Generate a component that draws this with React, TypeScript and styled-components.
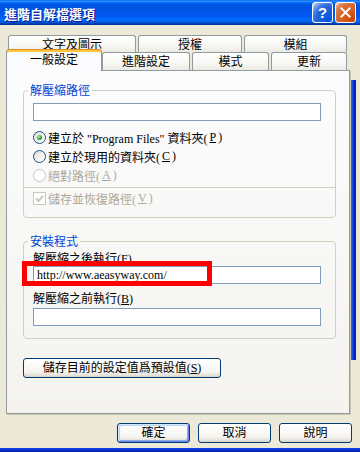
import React from 'react';
import styled, { createGlobalStyle, css } from 'styled-components';

const GlobalStyle = createGlobalStyle`
  html, body {
    margin: 0;
    padding: 0;
  }
  body {
    width: 360px;
    height: 452px;
    overflow: hidden;
    background: #ece9d8;
    font-family: "Liberation Serif", "Noto Sans CJK TC", serif;
    font-size: 12px;
    color: #000;
  }
`;

const Window = styled.div`
    position: relative;
    width: 360px;
    height: 452px;
    display: flex;
    flex-direction: column;
    background: #ece9d8;
`;

const TitleBar = styled.div`
    flex: 0 0 25px;
    display: flex;
    align-items: center;
    padding: 0 4px 0 4px;
    background: linear-gradient(
        to bottom,
        #0058ee 0%,
        #3593ff 4%,
        #288eff 6%,
        #127dff 8%,
        #036ffc 10%,
        #0262ee 14%,
        #0057e5 20%,
        #0054e3 24%,
        #0055eb 56%,
        #005bf5 66%,
        #026afe 76%,
        #0062ef 86%,
        #0052d6 92%,
        #0040ab 94%,
        #003092 100%
    );
`;

const Title = styled.div`
    flex: 1;
    padding-top: 2px;
    color: #fff;
    font-family: "Noto Sans CJK TC", sans-serif;
    font-weight: bold;
    font-size: 13px;
    line-height: 16px;
    text-shadow: 1px 1px #0f1089;
`;

const CaptionButton = styled.div<{ $kind: 'help' | 'close' }>`
    width: 21px;
    height: 21px;
    box-sizing: border-box;
    margin-left: 2px;
    border: 1px solid #fff;
    border-radius: 3px;
    display: flex;
    align-items: center;
    justify-content: center;
    color: #fff;
    font-family: "Liberation Sans", sans-serif;
    font-weight: bold;
    font-size: 15px;
    background: ${(p) =>
        p.$kind === 'close'
            ? 'radial-gradient(circle at 90% 90%, #cc4600 0%, #dc6527 55%, #cd7546 70%, #ee8d61 85%, #f9ddd3 100%)'
            : 'radial-gradient(circle at 90% 90%, #0054e9 0%, #2263d5 55%, #4479e4 70%, #a3bbec 90%, #ffffff 100%)'};
`;

// edge of the window behind, showing through on the right
const BackEdge = styled.div`
    position: absolute;
    left: 351px;
    top: 80px;
    width: 5px;
    height: 280px;
    background: linear-gradient(to right, #3a6ee8, #0831d9 50%, #0019a0);
`;

const Body = styled.div`
    flex: 1;
    display: flex;
    flex-direction: column;
    padding: 10px 10px 0 6px;
`;

const TabRow = styled.div<{ $height: number }>`
    display: flex;
    gap: 2px;
    margin-left: 2px;
    height: ${(p) => p.$height}px;
`;

const Tab = styled.div<{ $w: number; $active?: boolean }>`
    width: ${(p) => p.$w}px;
    height: 100%;
    box-sizing: border-box;
    border: 1px solid #919b9c;
    border-bottom: none;
    border-radius: 3px 3px 0 0;
    background: linear-gradient(#ffffff, #f7f7f4 60%, #ebeae4);
    font-family: "Noto Sans CJK TC", sans-serif;
    text-align: center;
    line-height: 16px;
    white-space: nowrap;
    ${(p) =>
        p.$active &&
        css`
            position: relative;
            z-index: 2;
            height: 22px;
            margin: -3px -2px 0 -2px;
            padding-top: 2px;
            line-height: 14px;
            background: #fcfcfe;
            border-top: 1px solid #e68b2c;
            box-shadow: inset 0 2px 0 #ffc73c;
        `}
`;

const Panel = styled.div`
    height: 344px;
    box-sizing: border-box;
    border: 1px solid #919b9c;
    box-shadow: 1px 1px 0 #c9c6b6;
    background: linear-gradient(#fcfcfe, #f4f3ee);
    padding: 12px 0 0 16px;
    display: flex;
    flex-direction: column;
    align-items: flex-start;
    font-family: "Liberation Serif", "Noto Sans CJK TC", serif;
`;

const Group = styled.fieldset<{ $top?: number; $bottom: number }>`
    margin: ${(p) => p.$top ?? 0}px 0 0 0;
    width: 313px;
    min-width: 0;
    box-sizing: border-box;
    border: 1px solid #d0d0bf;
    border-radius: 4px;
    padding: 0 9px ${(p) => p.$bottom}px 9px;
    display: flex;
    flex-direction: column;
    align-items: flex-start;
`;

const Legend = styled.legend`
    margin-left: -5px;
    padding: 0 2px;
    color: #0046d5;
    line-height: 14px;
    font-family: "Noto Sans CJK TC", sans-serif;
`;

const Field = styled.div<{ $top?: number }>`
    margin-top: ${(p) => p.$top ?? 0}px;
    width: 288px;
    height: 18px;
    box-sizing: border-box;
    border: 1px solid #7f9db9;
    background: #fff;
    padding-left: 3px;
    font-family: "Liberation Serif", serif;
    line-height: 16px;
    white-space: nowrap;
`;

const FieldLabel = styled.div<{ $top: number }>`
    margin-top: ${(p) => p.$top}px;
    line-height: 13px;
    white-space: nowrap;
`;

const Marked = styled.div`
    position: relative;
`;

const RedBox = styled.div`
    position: absolute;
    left: -11px;
    top: -5px;
    width: 190px;
    height: 25px;
    box-sizing: border-box;
    border: 5px solid #ff0000;
`;

const OptionList = styled.div`
    margin-top: 7px;
    display: flex;
    flex-direction: column;
`;

const Option = styled.div<{ $disabled?: boolean; $top?: number }>`
    margin-top: ${(p) => p.$top ?? 0}px;
    height: 19px;
    display: flex;
    align-items: center;
    gap: 2px;
    white-space: nowrap;
    color: ${(p) => (p.$disabled ? '#aca899' : '#000')};
`;

const Radio = styled.span<{ $checked?: boolean; $disabled?: boolean }>`
    position: relative;
    flex: 0 0 13px;
    width: 13px;
    height: 13px;
    box-sizing: border-box;
    border-radius: 50%;
    border: 1px solid ${(p) => (p.$disabled ? '#cac8bb' : '#1c5180')};
    background: ${(p) => (p.$disabled ? '#ffffff' : 'linear-gradient(135deg, #dcd9cf, #ffffff 80%)')};
    ${(p) =>
        p.$checked &&
        css`
            &::after {
                content: '';
                position: absolute;
                left: 3px;
                top: 3px;
                width: 5px;
                height: 5px;
                border-radius: 50%;
                background: radial-gradient(circle at 35% 35%, #a6f0a6, #21a121 60%, #0f7a0f);
            }
        `}
`;

const CheckBox = styled.span`
    flex: 0 0 13px;
    width: 13px;
    height: 13px;
    box-sizing: border-box;
    border: 1px solid #cac8bb;
    background: #fff;
    display: flex;
    align-items: center;
    justify-content: center;
`;

const Divider = styled.div`
    align-self: stretch;
    height: 1px;
    margin: 2px -9px 0 -9px;
    background: #d0d0bf;
`;

const PushButton = styled.button<{ $w: number; $default?: boolean }>`
    width: ${(p) => p.$w}px;
    height: 20px;
    box-sizing: border-box;
    padding: 0;
    border: 1px solid #003c74;
    border-radius: 3px;
    background: linear-gradient(#ffffff, #f6f5f1 70%, #e3e0d6 92%, #d6d0c5);
    font-family: "Liberation Serif", "Noto Sans CJK TC", serif;
    font-size: 12px;
    line-height: 18px;
    color: #000;
    white-space: nowrap;
    ${(p) =>
        p.$default &&
        css`
            box-shadow: inset 1px 1px 0 #cee7ff, inset -1px -1px 0 #6982ee, inset 2px 2px 0 #bcd4f6, inset -2px -2px 0 #89ade4;
        `}
`;

const SaveButton = styled(PushButton)`
    margin-top: 19px;
`;

const ButtonBar = styled.div`
    display: flex;
    justify-content: flex-end;
    gap: 8px;
    margin: 9px -2px 0 0;
`;

const BottomFrame = styled.div`
    flex: 0 0 4px;
    background: linear-gradient(#1a48e0, #0831d9 40%, #001ea0);
`;

const App: React.FC = () => {
    return (
        <Window>
            <GlobalStyle />
            <TitleBar>
                <Title>進階自解檔選項</Title>
                <CaptionButton $kind="help">?</CaptionButton>
                <CaptionButton $kind="close">
                    <svg width="11" height="11" viewBox="0 0 11 11">
                        <path d="M1.5 1.5 L9.5 9.5 M9.5 1.5 L1.5 9.5" stroke="#fff" strokeWidth="2" strokeLinecap="square" />
                    </svg>
                </CaptionButton>
            </TitleBar>
            <Body>
                <TabRow $height={17}>
                    <Tab $w={128}>文字及圖示</Tab>
                    <Tab $w={104}>授權</Tab>
                    <Tab $w={103}>模組</Tab>
                </TabRow>
                <TabRow $height={18}>
                    <Tab $w={96} $active>一般設定</Tab>
                    <Tab $w={88}>進階設定</Tab>
                    <Tab $w={77}>模式</Tab>
                    <Tab $w={76}>更新</Tab>
                </TabRow>
                <Panel>
                    <Group $bottom={9}>
                        <Legend>解壓縮路徑</Legend>
                        <Field $top={6} />
                        <OptionList>
                            <Option>
                                <Radio $checked />
                                建立於 "Program Files" 資料夾(<u>P</u>)
                            </Option>
                            <Option>
                                <Radio />
                                建立於現用的資料夾(<u>C</u>)
                            </Option>
                            <Option $disabled>
                                <Radio $disabled />
                                絕對路徑(<u>A</u>)
                            </Option>
                        </OptionList>
                        <Divider />
                        <Option $disabled $top={1}>
                            <CheckBox>
                                <svg width="9" height="9" viewBox="0 0 9 9">
                                    <path d="M1 4.5 L3.5 7 L8 2" stroke="#cac8bb" strokeWidth="2" fill="none" />
                                </svg>
                            </CheckBox>
                            儲存並恢復路徑(<u>V</u>)
                        </Option>
                    </Group>
                    <Group $top={16} $bottom={12}>
                        <Legend>安裝程式</Legend>
                        <FieldLabel $top={5}>解壓縮之後執行(<u>F</u>)</FieldLabel>
                        <Marked>
                            <Field>http://www.aeasyway.com/</Field>
                            <RedBox />
                        </Marked>
                        <FieldLabel $top={9}>解壓縮之前執行(<u>B</u>)</FieldLabel>
                        <Field $top={2} />
                    </Group>
                    <SaveButton $w={198}>儲存目前的設定值爲預設值(<u>S</u>)</SaveButton>
                </Panel>
                <ButtonBar>
                    <PushButton $w={73} $default>確定</PushButton>
                    <PushButton $w={73}>取消</PushButton>
                    <PushButton $w={73}>說明</PushButton>
                </ButtonBar>
            </Body>
            <BottomFrame />
            <BackEdge />
        </Window>
    );
};

export default App;
